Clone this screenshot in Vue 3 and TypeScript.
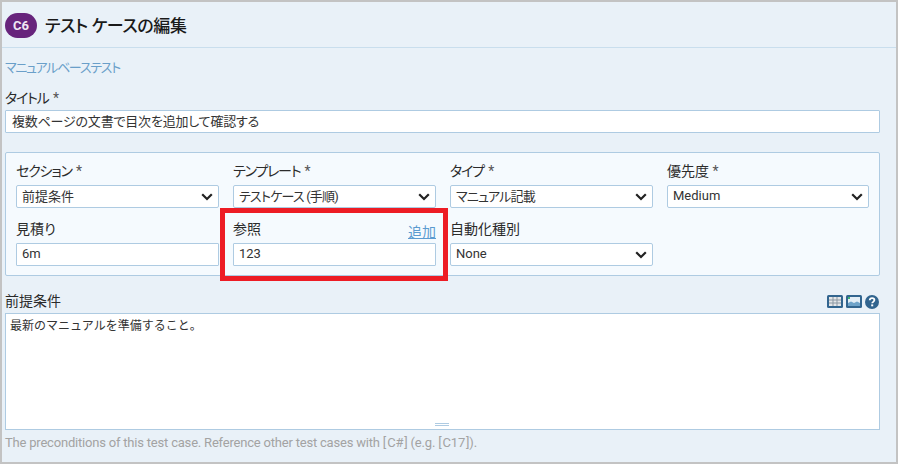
<script setup lang="ts">
interface Field {
  label: string
  required?: boolean
  kind: 'select' | 'input' | 'empty'
  value?: string
  add?: boolean
  tightLabel?: boolean
  tightValue?: boolean
}
const fields: Field[] = [
  { label: 'セクション', required: true, kind: 'select', value: '前提条件', tightLabel: true },
  { label: 'テンプレート', required: true, kind: 'select', value: 'テストケース (手順)', tightLabel: true, tightValue: true },
  { label: 'タイプ', required: true, kind: 'select', value: 'マニュアル記載', tightLabel: true, tightValue: true },
  { label: '優先度', required: true, kind: 'select', value: 'Medium' },
  { label: '見積り', kind: 'input', value: '6m' },
  { label: '参照', kind: 'input', value: '123', add: true },
  { label: '自動化種別', kind: 'select', value: 'None' },
  { label: '', kind: 'empty' },
]
</script>

<template>
  <div class="frame">
    <header class="head">
      <span class="badge">C6</span>
      <h1 class="title">テスト ケースの編集</h1>
    </header>
    <div class="body">
      <a class="sub">マニュアルベーステスト</a>
      <label class="lab title-lab tight">タイトル <i>*</i></label>
      <input class="ctl title-input" value="複数ページの文書で目次を追加して確認する" />
      <section class="panel">
        <div v-for="(f, i) in fields" :key="i" class="field">
          <template v-if="f.kind !== 'empty'">
            <div class="field-head">
              <label class="lab" :class="{ tight: f.tightLabel }">{{ f.label }} <i v-if="f.required">*</i></label>
              <a v-if="f.add" class="add">追加</a>
            </div>
            <div v-if="f.kind === 'select'" class="ctl sel">
              <span :class="{ 'tight-value': f.tightValue }">{{ f.value }}</span>
              <svg width="12" height="8" viewBox="0 0 12 8"><path d="M1.200 1.200 6 6l4.800-4.800" fill="none" stroke="#222" stroke-width="2.200" /></svg>
            </div>
            <input v-else class="ctl" :value="f.value" />
          </template>
        </div>
      </section>
      <div class="pre-head">
        <label class="lab pre-lab">前提条件</label>
        <div class="tools">
          <svg width="16" height="13" viewBox="0 0 16 13">
            <rect width="16" height="13" rx="1.500" fill="#32658f" />
            <rect x="2" y="2" width="12" height="9" fill="#e4e6e8" />
            <path d="M6 2v9M10 2v9M2 5h12M2 8h12" stroke="#8b98a3" stroke-width="1" />
          </svg>
          <svg width="16" height="13" viewBox="0 0 16 13">
            <rect width="16" height="13" rx="1.500" fill="#32658f" />
            <rect x="2" y="2" width="12" height="9" fill="#e3eef6" />
            <path d="M2 11V8l3-1.500 3 1.500 3-1.500 3 1.500v3z" fill="#6ea3c9" />
            <rect x="2" y="2" width="2" height="2" fill="#3cb371" />
          </svg>
          <svg width="14" height="14" viewBox="0 0 14 14">
            <circle cx="7" cy="7" r="7" fill="#32658f" />
            <path d="M4.700 5.300C4.800 3.900 5.800 3.200 7.100 3.200c1.400 0 2.300.8 2.300 1.900 0 1.800-2.200 1.700-2.200 3.200" fill="none" stroke="#fff" stroke-width="1.800" />
            <rect x="6.200" y="9.400" width="2" height="1.900" fill="#fff" />
          </svg>
        </div>
      </div>
      <div class="area">
        <span>最新のマニュアルを準備すること。</span>
        <i class="grip"></i>
      </div>
      <p class="hint">The preconditions of this test case. Reference other test cases with [&#8202;C#&#8202;] (e.g. [&#8202;C17&#8202;]).</p>
    </div>
    <div class="mark"></div>
  </div>
</template>

<style>
html, body { margin: 0; padding: 0; background: #e9f1f8; }
</style>

<style scoped>
.frame {
  position: relative;
  box-sizing: border-box;
  width: 898px;
  height: 464px;
  overflow: hidden;
  background: #e9f1f8;
  border: 2px solid #c3c3c3;
  font-family: Roboto, "Noto Sans CJK JP", sans-serif;
  font-feature-settings: "palt";
  color: #222;
}
.head {
  display: flex;
  align-items: center;
  gap: 8px;
  height: 46px;
  padding: 2px 3px 0;
  box-sizing: border-box;
  border-bottom: 1px solid #c9deed;
}
.badge {
  width: 32px;
  height: 25px;
  border-radius: 13px;
  background: #67247c;
  color: #f0e6f3;
  font-size: 13px;
  font-weight: 700;
  display: flex;
  align-items: center;
  justify-content: center;
}
.title {
  margin: 0;
  font-size: 17px;
  font-weight: 500;
  line-height: 26px;
  letter-spacing: -0.400px;
  color: #1a1a1a;
}
.body {
  display: flex;
  flex-direction: column;
  padding: 0 16px 0 3px;
}
.sub {
  margin-top: 10px;
  height: 20px;
  font-size: 13px;
  line-height: 20px;
  letter-spacing: -1.300px;
  color: #6a9fc9;
}
.lab {
  font-size: 14px;
  line-height: 20px;
  color: #2b2b2b;
}
.lab i { font-style: normal; color: #555; }
.tight { letter-spacing: -1.200px; }
.tight i { margin-left: 2px; }
.tight-value { letter-spacing: -0.800px; }
.title-lab { margin-top: 10px; height: 19px; }
.ctl {
  box-sizing: border-box;
  width: 100%;
  height: 23px;
  border: 1px solid #aecbe2;
  border-radius: 1px;
  background: #fff;
  padding: 0 5px 2px;
  font: inherit;
  font-size: 13px;
  color: #333;
  outline: none;
  display: block;
}
.title-input { margin-top: 3px; letter-spacing: -0.200px; padding-left: 6px; }
.panel {
  margin-top: 19px;
  box-sizing: border-box;
  height: 124px;
  background: #f5fafe;
  border: 1px solid #aecbe2;
  border-radius: 2px;
  padding: 8px 10px 0;
  display: grid;
  grid-template-columns: 203px 203px 203px 202px;
  column-gap: 14px;
  row-gap: 11px;
  grid-auto-rows: 47px;
}
.field { min-width: 0; }
.field-head {
  height: 24px;
  display: flex;
  justify-content: space-between;
  align-items: flex-start;
}
.add {
  font-size: 14px;
  line-height: 20px;
  margin-top: 3px;
  color: #5b9bd0;
  text-decoration: underline;
}
.sel {
  display: flex;
  align-items: center;
  justify-content: space-between;
  border-radius: 2px;
  padding-bottom: 3px;
}
.sel svg { margin-right: 0; margin-top: 3px; }
.pre-head {
  margin-top: 14px;
  height: 23px;
  display: flex;
  justify-content: space-between;
  align-items: center;
}
.pre-lab { margin-bottom: 2px; }
.tools {
  display: flex;
  align-items: center;
  gap: 3px;
  margin-right: 1px;
}
.area {
  position: relative;
  box-sizing: border-box;
  height: 117px;
  background: #fff;
  border: 1px solid #aecbe2;
  padding: 3px 4px;
  font-size: 12px;
  line-height: 18px;
  color: #333;
  font-feature-settings: normal;
}
.grip {
  position: absolute;
  left: 429px;
  bottom: 3px;
  width: 14px;
  height: 3px;
  border-top: 1px solid #aecbe2;
  border-bottom: 1px solid #aecbe2;
  box-sizing: border-box;
}
.hint {
  margin: 4px 0 0;
  font-size: 13px;
  line-height: 18px;
  letter-spacing: -0.200px;
  color: #a3a3a3;
}
.mark {
  position: absolute;
  left: 218px;
  top: 206px;
  width: 228px;
  height: 73px;
  box-sizing: border-box;
  border: 5px solid #ed1c24;
}
</style>
